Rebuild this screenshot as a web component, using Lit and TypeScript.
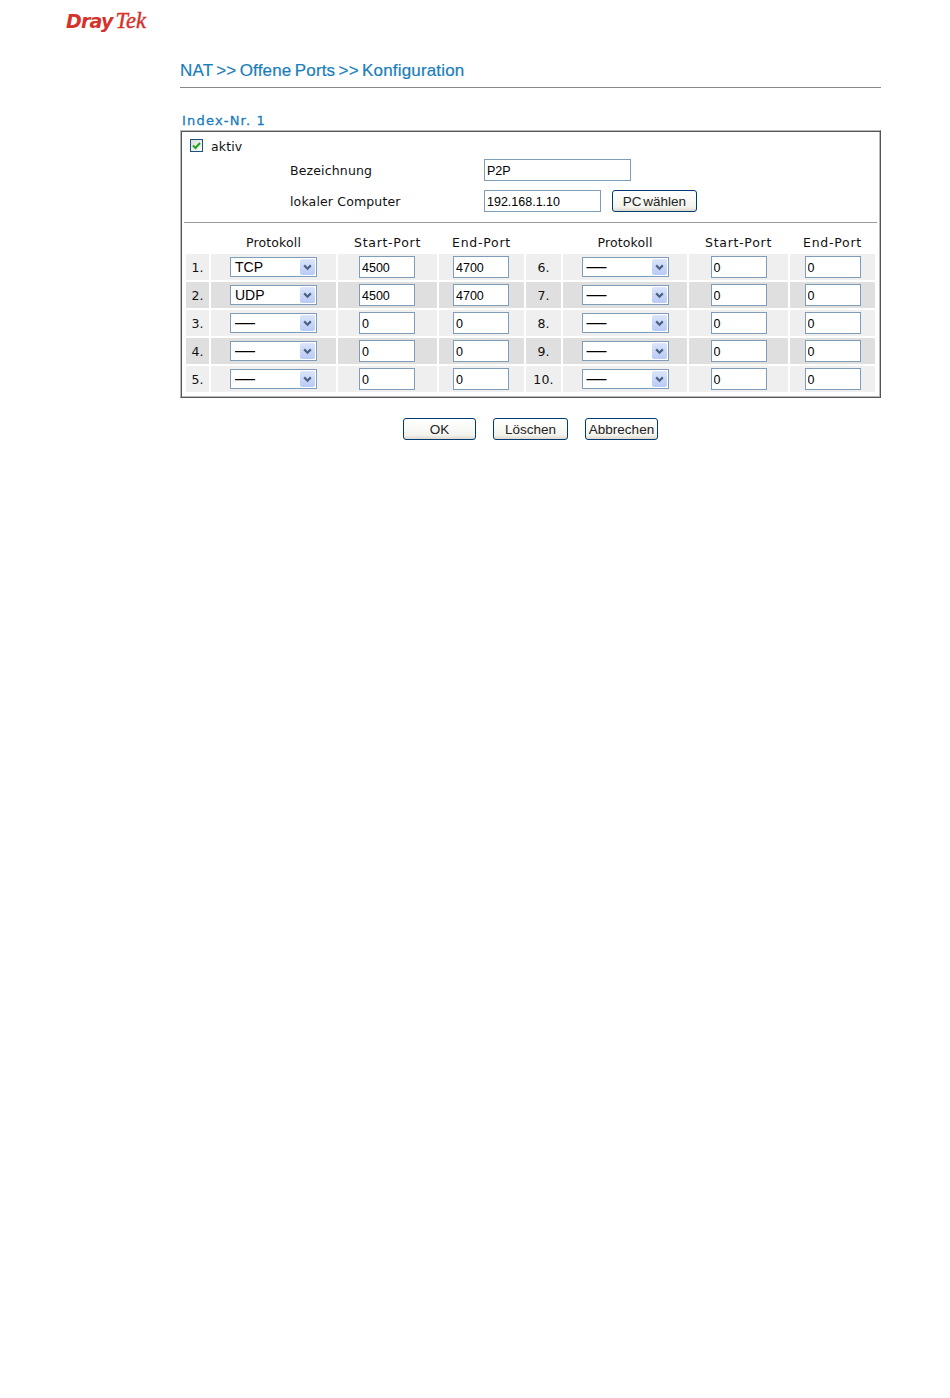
import { LitElement, html, css } from "lit";
import { customElement } from "lit/decorators.js";

const D = "—";
const rows = [
  [["1.", "TCP", "4500", "4700"], ["6.", D, "0", "0"]],
  [["2.", "UDP", "4500", "4700"], ["7.", D, "0", "0"]],
  [["3.", D, "0", "0"], ["8.", D, "0", "0"]],
  [["4.", D, "0", "0"], ["9.", D, "0", "0"]],
  [["5.", D, "0", "0"], ["10.", D, "0", "0"]],
];

@customElement("app-root")
export class AppRoot extends LitElement {
  static styles = css`
    :host { display: block; width: 950px; height: 1398px; background: #fff; font-family: "DejaVu Sans", sans-serif; font-size: 12.5px; letter-spacing: 0.15px; color: #111; overflow: hidden; }
    .logo { height: 54px; padding: 6px 0 0 66px; box-sizing: border-box; line-height: 30px; color: #d4322b; white-space: nowrap; letter-spacing: 0; }
    .dray { font-family: "DejaVu Sans", sans-serif; font-weight: bold; font-style: italic; font-size: 19px; letter-spacing: -0.8px; }
    .tek { font-family: "Liberation Serif", serif; font-style: italic; font-size: 22.5px; margin-left: 3px; -webkit-text-stroke: 0.4px #d4322b; }
    .content { margin-left: 180px; width: 701px; }
    .title { font-family: "Liberation Sans", sans-serif; font-size: 17px; letter-spacing: 0.17px; word-spacing: -1.6px; line-height: 24px; color: #1a7dba; height: 34px; padding-top: 5px; box-sizing: border-box; border-bottom: 1px solid #8a8a8a; white-space: pre; -webkit-text-stroke: 0.2px #1a7dba; }
    .index { margin: 24px 0 0 2px; height: 18px; line-height: 18px; color: #1a7dba; font-size: 13px; letter-spacing: 1.2px; -webkit-text-stroke: 0.3px #1a7dba; }
    .box { box-sizing: border-box; height: 268px; border: 1px solid; border-color: #bbb #555 #555 #bbb; box-shadow: inset 1px 1px 0 #555, inset -1px -1px 0 #bbb; padding: 3px 3px 2px; }
    .aktiv { height: 25px; display: flex; align-items: center; padding-left: 6px; gap: 8px; }
    .cb { box-sizing: border-box; width: 13px; height: 13px; margin-bottom: 2px; border: 1px solid #1c5180; background: linear-gradient(135deg, #dcdcd7, #fbfbf9); display: flex; }
    .cb svg { width: 11px; height: 11px; }
    .form { display: grid; grid-template-columns: 194px 128px auto; align-items: center; padding-left: 106px; row-gap: 9px; }
    .form button { width: 85px; word-spacing: -2px; }
    .tf { box-sizing: border-box; border: 1px solid #7f9db9; background: #fff; height: 22px; padding: 1px 2px 0; font: 12.5px/19px "Liberation Sans", sans-serif; color: #000; outline: none; }
    .wide { width: 147px; }
    .mid { width: 117px; }
    .sep { height: 1px; background: #999; margin: 10px 0 0; }
    .head, .row { display: grid; grid-template-columns: 23px 125px 99px 85px 35px 124px 99px 85px; column-gap: 2px; margin-left: 2px; }
    .head { height: 28px; align-items: end; text-align: center; }
    .head span { line-height: 17px; }
    .head .port { letter-spacing: 0.72px; }
    .rows { display: grid; row-gap: 2px; margin-top: 3px; }
    .c { height: 26px; background: #efefef; display: flex; align-items: center; justify-content: center; box-sizing: border-box; }
    .alt .c { background: #dfdfdf; }
    .shift { padding-right: 1px; }
    .num { width: 56px; }
    .sel { position: relative; box-sizing: border-box; width: 87px; height: 20px; border: 1px solid #7f9db9; background: #fff; font: 14px/18px "Liberation Sans", sans-serif; letter-spacing: 0; color: #000; padding-left: 4px; }
    .dash { font-size: 20px; line-height: 16px; }
    .arr { position: absolute; top: 1px; right: 1px; width: 15px; height: 16px; border-radius: 2px; background: linear-gradient(#dbe5fb, #b8caf5); display: flex; align-items: center; justify-content: center; }
    .arr svg { width: 9px; height: 7px; }
    .bar { display: flex; padding: 20px 0 0 223px; gap: 17px; }
    button { box-sizing: border-box; height: 22px; padding: 0; border: 1px solid #003c74; border-radius: 3px; background: linear-gradient(#fff, #f4f4ee 80%, #dcd8ce); font: 13.5px "Liberation Sans", sans-serif; color: #222; }
    .ok { width: 73px; }
    .del { width: 75px; }
  `;

  private side(r: string[], shift: boolean) {
    const s = shift ? "c shift" : "c";
    return html`
      <div class="c">${r[0]}</div>
      <div class="c"><div class="sel"><span class=${r[1] === D ? "dash" : ""}>${r[1]}</span><span class="arr"><svg viewBox="0 0 9 7"><path d="M1.2 1.4l3.3 3.3 3.3-3.3" fill="none" stroke="#4d6185" stroke-width="2.2"/></svg></span></div></div>
      <div class=${s}><input class="tf num" .value=${r[2]}></div>
      <div class=${s}><input class="tf num" .value=${r[3]}></div>`;
  }

  render() {
    return html`
      <div class="logo"><span class="dray">Dray</span><span class="tek">Tek</span></div>
      <div class="content">
        <div class="title">NAT &gt;&gt; Offene Ports &gt;&gt; Konfiguration</div>
        <div class="index">Index-Nr. 1</div>
        <div class="box">
          <div class="aktiv">
            <span class="cb"><svg viewBox="0 0 11 11"><path d="M2 5.5l2.5 2.5 4.5-5" fill="none" stroke="#21a121" stroke-width="2"/></svg></span>
            <span>aktiv</span>
          </div>
          <div class="form">
            <span>Bezeichnung</span><input class="tf wide" value="P2P"><span></span>
            <span>lokaler Computer</span><input class="tf mid" value="192.168.1.10"><button>PC wählen</button>
          </div>
          <div class="sep"></div>
          <div class="head">
            <span></span><span>Protokoll</span><span class="port">Start-Port</span><span class="port">End-Port</span>
            <span></span><span>Protokoll</span><span class="port">Start-Port</span><span class="port">End-Port</span>
          </div>
          <div class="rows">
            ${rows.map((p, i) => html`<div class="row ${i % 2 ? "alt" : ""}">${this.side(p[0], true)}${this.side(p[1], false)}</div>`)}
          </div>
        </div>
        <div class="bar">
          <button class="ok">OK</button>
          <button class="del">Löschen</button>
          <button class="ok">Abbrechen</button>
        </div>
      </div>`;
  }
}
